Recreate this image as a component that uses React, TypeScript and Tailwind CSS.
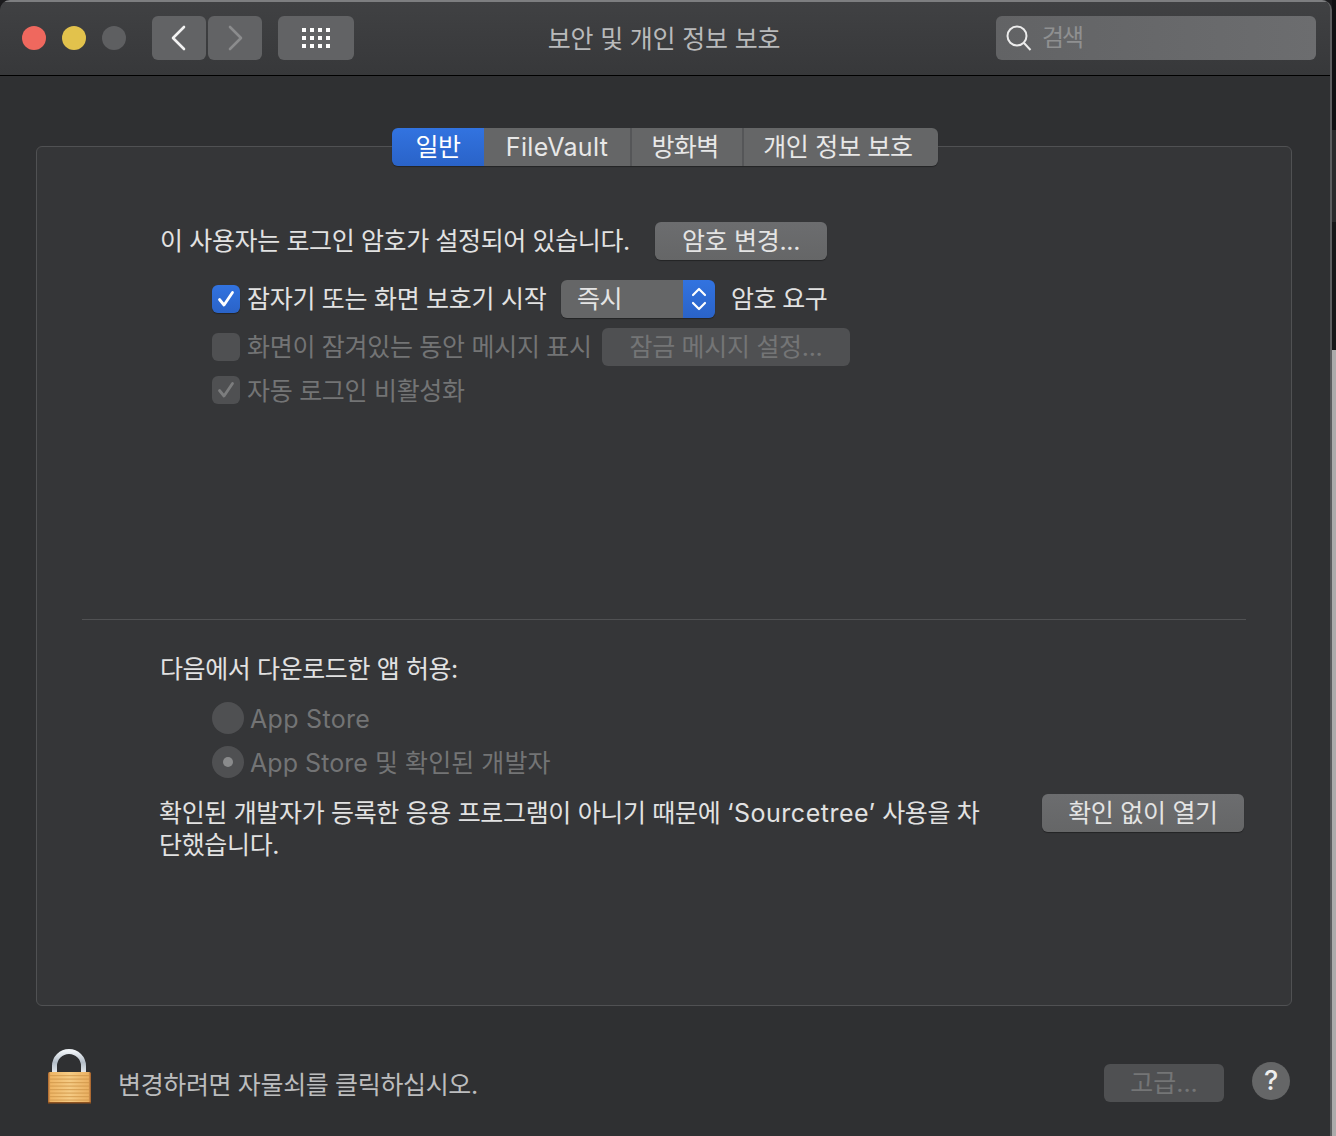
const btn = 'flex items-center justify-center rounded-[6px] bg-gradient-to-b from-[#6c6d6f] to-[#656667] text-[#e4e4e4] shadow-[0_1px_1px_rgba(0,0,0,0.35)]';
const btnOff = 'flex items-center justify-center rounded-[6px] bg-[#4f5052] text-[#747576]';

const LockIcon = () => (
  <svg width="44" height="55" viewBox="0 0 44 55">
    <defs>
      <linearGradient id="shackle" x1="0" y1="0" x2="0" y2="1">
        <stop offset="0" stopColor="#eef2f6" />
        <stop offset="0.5" stopColor="#b4bec9" />
        <stop offset="1" stopColor="#e6eaee" />
      </linearGradient>
      <linearGradient id="lockBody" x1="0" y1="0" x2="1" y2="0">
        <stop offset="0" stopColor="#a9622a" />
        <stop offset="0.06" stopColor="#eeb565" />
        <stop offset="0.5" stopColor="#f5cb84" />
        <stop offset="0.94" stopColor="#eab062" />
        <stop offset="1" stopColor="#a05a26" />
      </linearGradient>
    </defs>
    <path d="M6.5 24V17a14.5 14.5 0 0 1 29 0v7" fill="none" stroke="url(#shackle)" strokeWidth="5" />
    <rect x="0" y="23" width="43" height="31" rx="1.5" fill="url(#lockBody)" />
    {[26, 29.5, 33, 36.5, 40, 43.5, 47, 50.5].map((y) => (
      <rect key={y} x="2" y={y} width="39" height="1.2" fill="#cf9649" opacity="0.7" />
    ))}
    <rect x="0" y="53" width="43" height="1.5" fill="#8f5320" />
  </svg>
);

const Check = ({ color }: { color: string }) => (
  <svg width="20" height="20" viewBox="0 0 20 20" fill="none">
    <path d="M3.5 10.5L8 16L16.5 3.5" stroke={color} strokeWidth="2.8" strokeLinecap="round" strokeLinejoin="round" />
  </svg>
);

export default function App() {
  return (
    <div className="flex w-[1336px] h-[1136px] bg-[#1b1b1d] font-['Inter','Noto_Sans_CJK_KR',sans-serif] text-[25px] leading-[32px] overflow-hidden">
      {/* Window */}
      <div className="flex flex-col w-[1332px] h-full bg-[#2f3032] rounded-t-[10px] border-r-2 border-[#5c5d5f] overflow-hidden">
        {/* Title bar */}
        <div className="flex items-center shrink-0 h-[76px] pl-[22px] pr-[14px] pb-[1px] bg-gradient-to-b from-[#404143] to-[#37383a] border-t-2 border-[#7d7e80] border-b border-b-black">
          <div className="flex gap-[16px]">
            <div className="w-[24px] h-[24px] rounded-full bg-[#ef685e]" />
            <div className="w-[24px] h-[24px] rounded-full bg-[#e2c24c]" />
            <div className="w-[24px] h-[24px] rounded-full bg-[#5e5f61]" />
          </div>
          <div className={`${btnOff} !bg-[#626365] w-[54px] h-[44px] ml-[26px]`}>
            <svg width="18" height="26" viewBox="0 0 18 26" fill="none">
              <path d="M14 2L3 13L14 24" stroke="#f2f2f2" strokeWidth="2.6" strokeLinecap="round" strokeLinejoin="round" />
            </svg>
          </div>
          <div className={`${btnOff} !bg-[#626365] w-[54px] h-[44px] ml-[2px]`}>
            <svg width="18" height="26" viewBox="0 0 18 26" fill="none">
              <path d="M4 2L15 13L4 24" stroke="#8b8c8d" strokeWidth="2.6" strokeLinecap="round" strokeLinejoin="round" />
            </svg>
          </div>
          <div className={`${btnOff} !bg-[#626365] w-[76px] h-[44px] ml-[16px]`}>
            <div className="grid grid-cols-4 gap-x-[4px] gap-y-[4px]">
              {Array.from({ length: 12 }).map((_, i) => (
                <div key={i} className="w-[4px] h-[4px] bg-white" />
              ))}
            </div>
          </div>
          <div className="flex-1 pr-[22px] mt-[2px] text-center text-[#b9babb] tracking-[-0.2px]">보안 및 개인 정보 보호</div>
          <div className="flex items-center w-[320px] h-[44px] pl-[10px] rounded-[6px] bg-gradient-to-r from-[#626365] to-[#6c6d6f]">
            <svg width="26" height="26" viewBox="0 0 26 26" fill="none">
              <circle cx="11" cy="11" r="9.5" stroke="#ececec" strokeWidth="2" />
              <path d="M18 18L24.5 25" stroke="#ececec" strokeWidth="2" />
            </svg>
            <span className="ml-[10px] -mt-[1px] text-[24px] text-[#8f9091] tracking-[-2px]">검색</span>
          </div>
        </div>

        {/* Panel */}
        <div className="flex flex-col shrink-0 ml-[36px] mt-[70px] w-[1256px] h-[860px] rounded-[6px] border border-[#505153] bg-[#353638]">
          <div className="flex self-start ml-[355px] -mt-[19px] h-[38px] rounded-[6px] text-[#e8e8e8] shadow-[0_1px_1px_rgba(0,0,0,0.35)]">
            <div className="flex items-center justify-center w-[92px] rounded-l-[6px] bg-gradient-to-b from-[#3273e0] to-[#2a63c8] text-white tracking-[-0.6px]">일반</div>
            <div className="flex items-center justify-center w-[148px] bg-[#656667] border-r-2 border-[#555658] tracking-[0.3px]">FileVault</div>
            <div className="flex items-center justify-center w-[112px] pr-[4px] bg-[#656667] border-r-2 border-[#555658] tracking-[-0.6px]">방화벽</div>
            <div className="flex items-center justify-center w-[194px] pr-[6px] rounded-r-[6px] bg-[#656667] tracking-[-0.3px]">개인 정보 보호</div>
          </div>

          <div className="flex items-center h-[38px] mt-[56px] pl-[123px]">
            <span className="w-[495px] text-[#e2e2e2] tracking-[-0.38px] whitespace-nowrap">이 사용자는 로그인 암호가 설정되어 있습니다.</span>
            <div className={`${btn} w-[172px] h-[38px] tracking-[-0.3px]`}>암호 변경...</div>
          </div>

          <div className="flex items-center h-[38px] mt-[20px] pl-[175px]">
            <div className="flex items-center justify-center w-[28px] h-[28px] rounded-[6px] bg-gradient-to-b from-[#3273e0] to-[#2a63c8] shadow-[0_1px_1px_rgba(0,0,0,0.35)]">
              <Check color="#ffffff" />
            </div>
            <span className="w-[314px] ml-[7px] text-[#e2e2e2] tracking-[-0.3px] whitespace-nowrap">잠자기 또는 화면 보호기 시작</span>
            <div className="flex w-[154px] h-[38px] rounded-[6px] overflow-hidden shadow-[0_1px_1px_rgba(0,0,0,0.35)]">
              <div className="flex items-center flex-1 pl-[16px] bg-[#656667] text-[#e4e4e4] tracking-[-0.6px]">즉시</div>
              <div className="flex items-center justify-center w-[32px] bg-gradient-to-b from-[#3273e0] to-[#2a63c8]">
                <svg width="18" height="28" viewBox="0 0 18 28" fill="none">
                  <path d="M3 10L9 4L15 10M3 18L9 24L15 18" stroke="#ffffff" strokeWidth="2.2" strokeLinecap="round" strokeLinejoin="round" />
                </svg>
              </div>
            </div>
            <span className="ml-[16px] text-[#e2e2e2] tracking-[-0.6px]">암호 요구</span>
          </div>

          <div className="flex items-center h-[38px] mt-[10px] pl-[175px]">
            <div className="w-[28px] h-[28px] rounded-[6px] bg-[#4f5052]" />
            <span className="w-[355px] ml-[7px] text-[#737475] tracking-[-0.3px] whitespace-nowrap">화면이 잠겨있는 동안 메시지 표시</span>
            <div className={`${btnOff} w-[248px] h-[38px] tracking-[-0.3px]`}>잠금 메시지 설정...</div>
          </div>

          <div className="flex items-center h-[38px] mt-[5px] pl-[175px]">
            <div className="flex items-center justify-center w-[28px] h-[28px] rounded-[6px] bg-[#4f5052]">
              <Check color="#7c7d7e" />
            </div>
            <span className="ml-[7px] pt-[2px] text-[#737475] tracking-[-0.3px]">자동 로그인 비활성화</span>
          </div>

          <div className="h-[1px] mt-[210px] mx-[45px] bg-[#505153]" />

          <div className="flex items-center h-[38px] mt-[29px] pt-[2px] pl-[123px] text-[#e2e2e2] tracking-[-0.4px]">다음에서 다운로드한 앱 허용:</div>

          <div className="flex items-center h-[32px] mt-[15px] pl-[175px]">
            <div className="w-[32px] h-[32px] rounded-full bg-[#4f5052]" />
            <span className="ml-[6px] pt-[2px] text-[#737475] tracking-[0.3px]">App Store</span>
          </div>
          <div className="flex items-center h-[32px] mt-[12px] pl-[175px]">
            <div className="flex items-center justify-center w-[32px] h-[32px] rounded-full bg-[#4f5052]">
              <div className="w-[10px] h-[10px] rounded-full bg-[#8a8b8c]" />
            </div>
            <span className="ml-[6px] pt-[2px] text-[#737475] tracking-[0.05px]">App Store 및 확인된 개발자</span>
          </div>

          <div className="flex items-start justify-between mt-[16px] pl-[122px] pr-[47px]">
            <p className="pt-[3px] text-[#e2e2e2] tracking-[-0.34px] whitespace-nowrap">
              확인된 개발자가 등록한 응용 프로그램이 아니기 때문에 <span className="tracking-[0.5px]">‘Sourcetree’</span> 사용을 차
              <br />
              단했습니다.
            </p>
            <div className={`${btn} w-[202px] h-[38px] tracking-[-0.3px]`}>확인 없이 열기</div>
          </div>
        </div>

        {/* Footer */}
        <div className="flex items-start flex-1 pl-[48px] pr-[40px] pt-[43px]">
          <LockIcon />
          <span className="ml-[26px] mt-[20px] text-[#bcbdbe] tracking-[-0.36px]">변경하려면 자물쇠를 클릭하십시오.</span>
          <div className={`${btnOff} ml-auto mt-[15px] w-[120px] h-[38px]`}>고급...</div>
          <div className="flex items-center justify-center ml-[28px] mt-[13px] w-[38px] h-[38px] rounded-full bg-[#656667] text-[#eeeeee] text-[27px] font-medium">?</div>
        </div>
      </div>

      {/* Desktop sliver behind the window */}
      <div className="flex flex-col flex-1 h-full">
        <div className="h-[130px] bg-[#101012]" />
        <div className="h-[92px] bg-[#2a2a2c]" />
        <div className="h-[128px] bg-[#161618]" />
        <div className="flex-1 bg-[#ababab]" />
      </div>
    </div>
  );
}
